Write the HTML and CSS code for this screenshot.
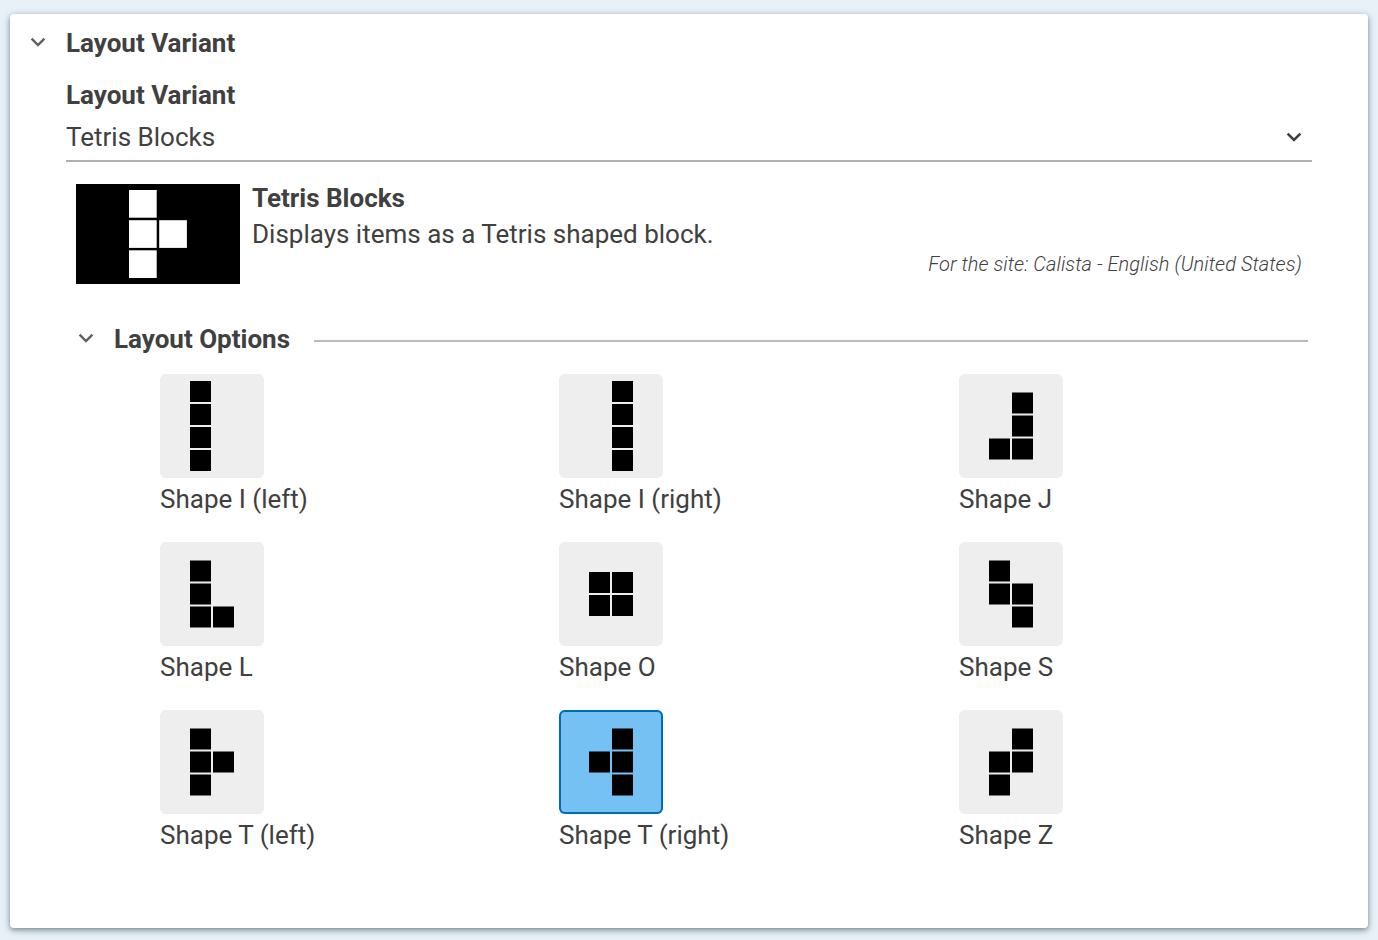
FILE: index.html
```html
<!DOCTYPE html>
<html lang="en">
<head>
<meta charset="utf-8">
<title>Layout Variant</title>
<link rel="stylesheet" href="styles.css">
</head>
<body>
<main class="panel">
  <header class="panel-header">
    <svg class="chevron" viewBox="0 0 16 10"><path d="M1.6 1.6 8 8l6.4-6.4"/></svg>
    <h1 class="heading">Layout Variant</h1>
  </header>
  <section class="content">
    <h2 class="heading field-label">Layout Variant</h2>
    <div class="select">
      <span>Tetris Blocks</span>
      <svg class="chevron chevron-strong" viewBox="0 0 16 10"><path d="M1.6 1.6 8 8l6.4-6.4"/></svg>
    </div>
    <div class="preview">
      <svg class="preview-image" viewBox="0 0 164 100">
        <rect width="164" height="100" fill="#000"/>
        <g fill="#fff">
          <rect x="53" y="6" width="27.7" height="27.7"/>
          <rect x="53" y="36.2" width="27.7" height="27.7"/>
          <rect x="83.2" y="36.2" width="27.7" height="27.7"/>
          <rect x="53" y="66.3" width="27.7" height="27.7"/>
        </g>
      </svg>
      <div class="preview-text">
        <h3 class="heading preview-title">Tetris Blocks</h3>
        <p class="description">Displays items as a Tetris shaped block.</p>
        <p class="site">For the site: Calista - English (United States)</p>
      </div>
    </div>
    <div class="options-header">
      <svg class="chevron" viewBox="0 0 16 10"><path d="M1.6 1.6 8 8l6.4-6.4"/></svg>
      <h2 class="heading">Layout Options</h2>
      <div class="rule"></div>
    </div>
    <div class="options">
      <div class="option"><svg class="tile" viewBox="0 0 104 104"><path d="M30 7h21v21H30zM30 30h21v21H30zM30 53h21v21H30zM30 76h21v21H30z"/></svg><span>Shape I (left)</span></div>
      <div class="option"><svg class="tile" viewBox="0 0 104 104"><path d="M53 7h21v21H53zM53 30h21v21H53zM53 53h21v21H53zM53 76h21v21H53z"/></svg><span>Shape I (right)</span></div>
      <div class="option"><svg class="tile" viewBox="0 0 104 104"><path d="M53 18.5h21v21H53zM53 41.5h21v21H53zM53 64.5h21v21H53zM30 64.5h21v21H30z"/></svg><span>Shape J</span></div>
      <div class="option"><svg class="tile" viewBox="0 0 104 104"><path d="M30 18.5h21v21H30zM30 41.5h21v21H30zM30 64.5h21v21H30zM53 64.5h21v21H53z"/></svg><span>Shape L</span></div>
      <div class="option"><svg class="tile" viewBox="0 0 104 104"><path d="M30 30h21v21H30zM53 30h21v21H53zM30 53h21v21H30zM53 53h21v21H53z"/></svg><span>Shape O</span></div>
      <div class="option"><svg class="tile" viewBox="0 0 104 104"><path d="M30 18.5h21v21H30zM30 41.5h21v21H30zM53 41.5h21v21H53zM53 64.5h21v21H53z"/></svg><span>Shape S</span></div>
      <div class="option"><svg class="tile" viewBox="0 0 104 104"><path d="M30 18.5h21v21H30zM30 41.5h21v21H30zM53 41.5h21v21H53zM30 64.5h21v21H30z"/></svg><span>Shape T (left)</span></div>
      <div class="option selected"><svg class="tile" viewBox="0 0 104 104"><path d="M53 18.5h21v21H53zM30 41.5h21v21H30zM53 41.5h21v21H53zM53 64.5h21v21H53z"/></svg><span>Shape T (right)</span></div>
      <div class="option"><svg class="tile" viewBox="0 0 104 104"><path d="M53 18.5h21v21H53zM30 41.5h21v21H30zM53 41.5h21v21H53zM30 64.5h21v21H30z"/></svg><span>Shape Z</span></div>
    </div>
  </section>
</main>
</body>
</html>
```
FILE: styles.css
```css
* { box-sizing: border-box; }
body {
  margin: 0;
  height: 940px;
  padding: 14px 10px 12px;
  background: #e8f1f8;
  color: #404040;
  font: 26px/36px Roboto, sans-serif;
}
h1, h2, h3, p { margin: 0; }
.panel {
  height: 914px;
  background: #fff;
  border-radius: 4px;
  box-shadow: 0 2px 5px rgba(30, 60, 60, .45), 0 2px 10px rgba(30, 60, 60, .2);
}
.heading { font-size: 26px; line-height: 36px; font-weight: 700; }
.chevron {
  width: 16px;
  height: 10px;
  flex: none;
  margin-bottom: 2px;
  fill: none;
  stroke: #606060;
  stroke-width: 2.4;
}
.chevron-strong { stroke: #404040; stroke-width: 2.6; margin-bottom: 0; }
.panel-header {
  display: flex;
  align-items: center;
  gap: 20px;
  padding: 11px 20px 0;
}
.content { padding: 16px 56px 0; }
.select {
  display: flex;
  align-items: center;
  justify-content: space-between;
  height: 49px;
  padding: 1px 10px 0 0;
  border-bottom: 2px solid #b0b0b0;
}
.preview { display: flex; gap: 12px; padding: 22px 10px 0; height: 159px; }
.preview-image { width: 164px; height: 100px; flex: none; }
.preview-text { flex: 1; margin-top: -4px; }
.site {
  font-size: 20px;
  line-height: 24px;
  font-weight: 300;
  font-style: italic;
  letter-spacing: .07px;
  text-align: right;
}
.options-header {
  display: flex;
  align-items: center;
  padding: 0 4px 0 12px;
}
.options-header .heading { margin: 0 24px 0 20px; }
.rule { flex: 1; height: 2px; background: #bababa; margin-top: 4px; }
.options {
  display: grid;
  grid-template-columns: 399px 400px 399px;
  grid-auto-rows: 168px;
  width: 1198px;
  margin: 17px 0 0 94px;
}
.option { display: flex; flex-direction: column; align-items: flex-start; gap: 3px; }
.tile { width: 104px; height: 104px; border-radius: 6px; background: #eee; }
.selected .tile { background: #75c1f3; box-shadow: inset 0 0 0 2px #006cb5; }
```
